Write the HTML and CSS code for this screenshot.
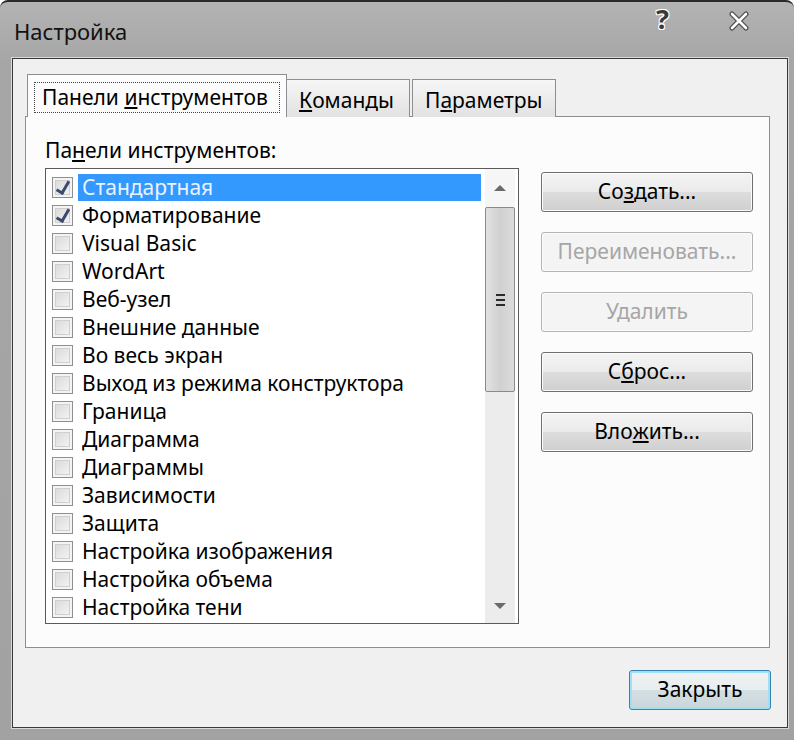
FILE: index.html
```html
<!DOCTYPE html>
<html lang="ru">
<head>
<meta charset="utf-8">
<title>Настройка</title>
<link rel="stylesheet" href="styles.css">
</head>
<body>
<div class="window">
  <div class="titlebar">
    <span class="title">Настройка</span>
    <span class="tb-help">?</span>
    <span class="tb-close">
      <svg width="22" height="20" viewBox="0 0 22 20">
        <path d="M4 3 L18 17 M18 3 L4 17" stroke="#4a4a4a" stroke-width="5" stroke-linecap="round" fill="none"/>
        <path d="M4 3 L18 17 M18 3 L4 17" stroke="#ffffff" stroke-width="2.6" stroke-linecap="round" fill="none"/>
      </svg>
    </span>
  </div>
  <div class="client">
    <div class="tabs">
      <div class="tab active"><span class="focus">Панели <u>и</u>нструментов</span></div>
      <div class="tab"><u>К</u>оманды</div>
      <div class="tab">П<u>а</u>раметры</div>
    </div>
    <div class="page">
      <div class="left">
        <div class="label">Па<u>н</u>ели инструментов:</div>
        <div class="listbox">
          <div class="items">
            <div class="row selected"><span class="cb checked"></span><span class="txt">Стандартная</span></div>
            <div class="row"><span class="cb checked"></span><span class="txt">Форматирование</span></div>
            <div class="row"><span class="cb"></span><span class="txt">Visual Basic</span></div>
            <div class="row"><span class="cb"></span><span class="txt">WordArt</span></div>
            <div class="row"><span class="cb"></span><span class="txt">Веб-узел</span></div>
            <div class="row"><span class="cb"></span><span class="txt">Внешние данные</span></div>
            <div class="row"><span class="cb"></span><span class="txt">Во весь экран</span></div>
            <div class="row"><span class="cb"></span><span class="txt">Выход из режима конструктора</span></div>
            <div class="row"><span class="cb"></span><span class="txt">Граница</span></div>
            <div class="row"><span class="cb"></span><span class="txt">Диаграмма</span></div>
            <div class="row"><span class="cb"></span><span class="txt">Диаграммы</span></div>
            <div class="row"><span class="cb"></span><span class="txt">Зависимости</span></div>
            <div class="row"><span class="cb"></span><span class="txt">Защита</span></div>
            <div class="row"><span class="cb"></span><span class="txt">Настройка изображения</span></div>
            <div class="row"><span class="cb"></span><span class="txt">Настройка объема</span></div>
            <div class="row"><span class="cb"></span><span class="txt">Настройка тени</span></div>
          </div>
          <div class="scrollbar">
            <div class="sb-arrow up"><svg width="14" height="8" viewBox="0 0 14 8"><path d="M1 7 L7 1 L13 7 Z" fill="#6a6a6a"/></svg></div>
            <div class="sb-track">
              <div class="sb-thumb">
                <span class="grip"></span><span class="grip"></span><span class="grip"></span>
              </div>
            </div>
            <div class="sb-arrow down"><svg width="14" height="8" viewBox="0 0 14 8"><path d="M1 1 L7 7 L13 1 Z" fill="#6a6a6a"/></svg></div>
          </div>
        </div>
      </div>
      <div class="buttons">
        <div class="btn">Со<u>з</u>дать...</div>
        <div class="btn disabled">Переименовать...</div>
        <div class="btn disabled">Удалить</div>
        <div class="btn">С<u>б</u>рос...</div>
        <div class="btn">Вло<u>ж</u>ить...</div>
      </div>
    </div>
    <div class="footer">
      <div class="btn default">Закрыть</div>
    </div>
  </div>
</div>
</body>
</html>
```

FILE: styles.css
```css
html, body {
  margin: 0;
  padding: 0;
  background: #ffffff;
}
body {
  font-family: "Noto Sans", "Open Sans", sans-serif;
  color: #000;
}
u { text-decoration: underline; text-underline-offset: 2px; }

.window {
  width: 794px;
  height: 740px;
  box-sizing: border-box;
  background: linear-gradient(#b3b3b3, #a6a6a6 60px, #a2a2a2);
  border-top: 2px solid #2a2a2a;
  border-radius: 8px 8px 0 0;
  display: flex;
  flex-direction: column;
  overflow: hidden;
}

.titlebar {
  height: 56px;
  flex: none;
  display: flex;
  align-items: center;
  position: relative;
}
.title {
  margin-left: 14px;
  margin-top: 2px;
  font-size: 22px;
  color: #111;
}
.tb-help {
  position: absolute;
  left: 656px;
  top: 3px;
  font-size: 27px;
  font-weight: bold;
  color: #3a3a3a;
  text-shadow: -1px -1px 0 #fff, 1px -1px 0 #fff, -1px 1px 0 #fff, 1px 1px 0 #fff;
  line-height: 1;
}
.tb-close {
  position: absolute;
  left: 728px;
  top: 9px;
  line-height: 0;
}

.client {
  margin: 0 6px 12px 12px;
  flex: 1;
  background: #f0f0f0;
  border: 1px solid #3a3a3a;
  box-shadow: 0 0 0 1px #d8d8d8;
  display: flex;
  flex-direction: column;
}

.tabs {
  display: flex;
  align-items: flex-end;
  margin: 15px 0 -1px 14px;
  position: relative;
  z-index: 1;
}
.tab {
  height: 38px;
  box-sizing: border-box;
  border: 1px solid #8c8e94;
  border-bottom: none;
  background: linear-gradient(#f6f6f6, #e2e2e2);
  font-size: 21px;
  display: flex;
  align-items: center;
  padding: 2px 12px 0 12px;
  margin-left: -1px;
  white-space: nowrap;
}
.tab + .tab + .tab { margin-left: 2px; }
.tab.active {
  height: 43px;
  width: 260px;
  margin-left: 0;
  background: #fcfcfc;
  padding: 4px 6px 2px 6px;
  border-color: #8c8e94;
}
.focus {
  display: block;
  flex: 1;
  border: 1.5px dotted #444;
  padding: 0 0 0 7px;
  line-height: 29px;
}
.tab:nth-child(2) { width: 124px; }
.tab:nth-child(3) { width: 144px; }

.page {
  margin-left: 12px;
  width: 745px;
  height: 532px;
  box-sizing: border-box;
  background: #fcfcfc;
  border: 1px solid #8c8e94;
  display: flex;
  padding: 20px 0 0 19px;
}

.left { display: flex; flex-direction: column; }
.label {
  font-size: 21px;
  line-height: 27px;
  margin-bottom: 4px;
}
.listbox {
  width: 474px;
  height: 456px;
  box-sizing: border-box;
  border: 1px solid #5a5a5a;
  background: #fff;
  display: flex;
}
.items {
  flex: 1;
  padding: 4px 4px 0 6px;
}
.row {
  height: 28px;
  display: flex;
  align-items: center;
}
.cb {
  width: 21px;
  height: 21px;
  box-sizing: border-box;
  border: 1px solid #8f8f8f;
  background: #f4f4f4;
  box-shadow: inset 0 0 0 2px #f4f4f4, inset 0 0 0 3px #cfcfcf;
  background-image: linear-gradient(135deg, #d6d6d6, #f7f7f7);
  flex: none;
  margin-right: 5px;
  position: relative;
}
.cb.checked::after {
  content: "";
  position: absolute;
  left: 6px;
  top: 1px;
  width: 5px;
  height: 12px;
  border-right: 3px solid #3b4a6e;
  border-bottom: 3px solid #3b4a6e;
  transform: rotate(30deg);
}
.txt {
  flex: 1;
  font-size: 21px;
  line-height: 27px;
  padding-left: 4px;
  white-space: nowrap;
}
.row.selected .txt {
  background: #3399ff;
  color: #eaf3ff;
}

.scrollbar {
  width: 30px;
  margin-right: 3px;
  display: flex;
  flex-direction: column;
  background: #ececec;
}
.sb-arrow {
  height: 38px;
  display: flex;
  align-items: center;
  justify-content: center;
  flex: none;
}
.sb-arrow.up { background: #f6f6f6; }
.sb-arrow.down { height: 34px; }
.sb-track { flex: 1; }
.sb-thumb {
  height: 185px;
  box-sizing: border-box;
  border: 1px solid #8a8a8a;
  border-radius: 2px;
  background: linear-gradient(90deg, #e2e2e2, #d0d0d0 50%, #dcdcdc);
  display: flex;
  flex-direction: column;
  align-items: center;
  justify-content: center;
  gap: 3px;
}
.grip {
  width: 9px;
  height: 2px;
  background: #2a2a2a;
  display: block;
}

.buttons {
  margin-left: 22px;
  margin-top: 35px;
  display: flex;
  flex-direction: column;
  gap: 20px;
}
.btn {
  width: 212px;
  height: 40px;
  box-sizing: border-box;
  border: 1px solid #6f6f6f;
  border-radius: 3px;
  background: linear-gradient(#f4f4f4, #ebebeb 50%, #dddddd 51%, #cfcfcf);
  box-shadow: inset 0 0 0 1px #fbfbfb;
  font-size: 21px;
  display: flex;
  align-items: center;
  justify-content: center;
  padding-bottom: 2px;
}
.btn.disabled {
  border-color: #b4b4b4;
  background: #f4f4f4;
  color: #a6a6a6;
}

.footer {
  display: flex;
  justify-content: flex-end;
  padding: 22px 16px 0 0;
}
.btn.default {
  width: 142px;
  height: 40px;
  border: 1px solid #3c7fb1;
  box-shadow: inset 0 0 0 2px #9ee0f5;
  background: linear-gradient(#f2f2f2, #e6eef0 50%, #d4dfe2 51%, #c9d6da);
}
```
